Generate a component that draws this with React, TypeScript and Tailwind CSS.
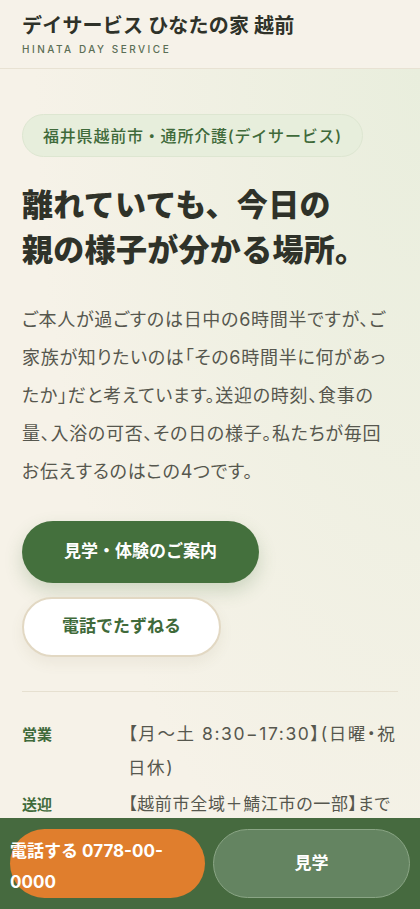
const jp = "font-['Inter','Noto_Sans_CJK_JP',sans-serif]";
const palt = "[font-feature-settings:'palt']";

export default function App() {
  return (
    <div className={`${jp} min-h-screen bg-[#f6f2e8] text-[#2f3229]`}>
      {/* HEADER */}
      <header className="border-b border-[#e8e2d3] bg-[#f6f2e9] px-[22px] pt-[13px] pb-[12px]">
        <h1 className="text-[20px] font-bold leading-[26px] tracking-[0.01em] text-[#2f3229]">
          デイサービス ひなたの家 越前
        </h1>
        <p className="mt-[3px] text-[10px] font-medium leading-[14px] tracking-[0.25em] text-[#5b6e55]">
          HINATA DAY SERVICE
        </p>
      </header>

      {/* HERO */}
      <main className="bg-[radial-gradient(ellipse_at_100%_0%,#e9eedd_0%,rgba(246,242,232,0)_65%)] px-[22px] pt-[45px] pb-[140px]">
        <div className="inline-flex h-[43px] items-center rounded-full border border-[#dde6d1] bg-[#e7eedc] px-[20px] text-[16px] font-medium tracking-[0.05em] text-[#3f6a3a]">
          福井県越前市・通所介護(デイサービス)
        </div>

        <h2 className="mt-[25px] text-[31px] font-black leading-[45px] tracking-[0.01em] text-[#2f3229]">
          離れていても、今日の
          <br />
          親の様子が分かる場所。
        </h2>

        <p className={`mt-[29px] text-[18px] leading-[38px] tracking-[0.04em] text-[#56574e] ${palt}`}>
          ご本人が過ごすのは日中の6時間半ですが、ご家族が知りたいのは「その6時間半に何があったか」だと考えています。送迎の時刻、食事の量、入浴の可否、その日の様子。私たちが毎回お伝えするのはこの4つです。
        </p>

        {/* BUTTONS */}
        <div className="mt-[30px] flex flex-col items-start gap-[14px]">
          <button className="h-[62px] rounded-full bg-[#44703d] px-[42px] text-[17px] font-bold text-white shadow-[0_8px_18px_rgba(68,112,61,0.22)]">
            見学・体験のご案内
          </button>
          <button className="h-[60px] rounded-full border-2 border-[#e2d8c3] bg-white px-[38px] text-[17px] font-bold text-[#3f6a3a] shadow-[0_6px_14px_rgba(120,100,60,0.08)]">
            電話でたずねる
          </button>
        </div>

        <div className="mt-[34px] border-t border-[#e6e0d0]" />

        {/* INFO */}
        <dl className="mt-[25px] grid grid-cols-[106px_1fr] gap-y-[2px]">
          <dt className="text-[15px] font-bold leading-[35px] text-[#3f6a3a]">営業</dt>
          <dd className={`text-[17.5px] leading-[34px] tracking-[0.09em] text-[#56574e] ${palt}`}>
            【月〜土 8:30−17:30】(日曜・祝日休)
          </dd>
          <dt className="text-[15px] font-bold leading-[35px] text-[#3f6a3a]">送迎</dt>
          <dd className={`text-[17px] leading-[34px] tracking-[0.04em] text-[#56574e] ${palt}`}>
            【越前市全域＋鯖江市の一部】まで送迎します
          </dd>
          <dt className="text-[15px] font-bold leading-[35px] text-[#3f6a3a]">定員</dt>
          <dd className={`text-[17px] leading-[34px] tracking-[0.04em] text-[#56574e] ${palt}`}>1日20名</dd>
        </dl>
      </main>

      {/* BOTTOM BAR */}
      <div className="fixed inset-x-0 bottom-0 grid h-[91px] grid-cols-[195px_1fr] gap-[8px] bg-[#466a3f] px-[10px] pt-[11px] pb-[11px]">
        <a className="block rounded-full bg-[#e07e2d] pt-[7px] text-left text-[17px] font-bold leading-[31px] text-white">
          電話する 0778-00-0000
        </a>
        <a className="flex items-center justify-center rounded-full border border-[#8aa585] bg-[#648461] text-[17px] font-bold text-white">
          見学
        </a>
      </div>
    </div>
  );
}
